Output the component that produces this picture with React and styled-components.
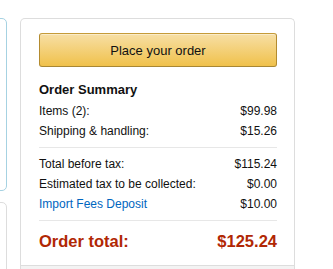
import React from "react";
import styled, { createGlobalStyle } from "styled-components";

const GlobalStyle = createGlobalStyle`
  html, body {
    margin: 0;
    padding: 0;
    background: #fff;
    font-family: "Liberation Sans", Arial, sans-serif;
    color: #111;
    overflow: hidden;
  }
`;

const Page = styled.div`
  display: flex;
  align-items: flex-start;
  gap: 13px;
  padding-top: 18px;
  height: 269px;
  box-sizing: border-box;
  overflow: hidden;
`;

const LeftColumn = styled.div`
  display: flex;
  flex-direction: column;
  gap: 11px;
  width: 100px;
  margin-left: -93px;
  flex-shrink: 0;
`;

const SideBox = styled.div`
  border: 1px solid ${(p) => (p.info ? "#a6d2e2" : "#ddd")};
  border-radius: 5px;
  height: ${(p) => p.height}px;
  background: #fff;
`;

const SummaryBox = styled.div`
  width: 275px;
  box-sizing: border-box;
  border: 1px solid #ddd;
  border-bottom: 0;
  border-radius: 5px 5px 0 0;
  overflow: hidden;
  flex-shrink: 0;
`;

const Inner = styled.div`
  padding: 14px 17px 12px 18px;
`;

const PlaceButton = styled.button`
  display: block;
  width: 100%;
  height: 34px;
  box-sizing: border-box;
  border: 1px solid;
  border-color: #c59b39 #b38b2f #a88734;
  border-radius: 3px;
  background: linear-gradient(to bottom, #f7dfa5, #f0c14b);
  box-shadow: inset 0 1px 0 rgba(255, 255, 255, 0.4);
  font-family: "Liberation Sans", Arial, sans-serif;
  font-size: 13px;
  color: #111;
  cursor: pointer;
  padding: 0;
`;

const Heading = styled.h3`
  margin: 13px 0 2px;
  font-size: 13px;
  line-height: 19px;
  font-weight: bold;
  color: #111;
`;

const Row = styled.div`
  display: flex;
  justify-content: space-between;
  font-size: 12px;
  line-height: 20px;
  color: #111;
`;

const Link = styled.a`
  color: #0066c0;
  text-decoration: none;
`;

const Divider = styled.hr`
  border: 0;
  border-top: 1px solid #e7e7e7;
  margin: 6px 0;
`;

const TotalRow = styled.div`
  display: flex;
  justify-content: space-between;
  margin-top: 8px;
  font-size: 16.5px;
  line-height: 24px;
  font-weight: bold;
  color: #b12704;
`;

const Footer = styled.div`
  border-top: 1px solid #ddd;
  background: #f3f3f3;
  height: 3px;
`;

const lines = [
  { label: "Items (2):", amount: "$99.98" },
  { label: "Shipping & handling:", amount: "$15.26" },
];

const taxLines = [
  { label: "Total before tax:", amount: "$115.24" },
  { label: "Estimated tax to be collected:", amount: "$0.00" },
  { label: "Import Fees Deposit", amount: "$10.00", link: true },
];

export default function App() {
  return (
    <>
      <GlobalStyle />
      <Page>
        <LeftColumn>
          <SideBox info height={171} />
          <SideBox height={90} />
        </LeftColumn>
        <SummaryBox>
          <Inner>
            <PlaceButton>Place your order</PlaceButton>
            <Heading>Order Summary</Heading>
            {lines.map((l) => (
              <Row key={l.label}>
                <span>{l.label}</span>
                <span>{l.amount}</span>
              </Row>
            ))}
            <Divider />
            {taxLines.map((l) => (
              <Row key={l.label}>
                {l.link ? <Link href="#">{l.label}</Link> : <span>{l.label}</span>}
                <span>{l.amount}</span>
              </Row>
            ))}
            <Divider />
            <TotalRow>
              <span>Order total:</span>
              <span>$125.24</span>
            </TotalRow>
          </Inner>
          <Footer />
        </SummaryBox>
      </Page>
    </>
  );
}
